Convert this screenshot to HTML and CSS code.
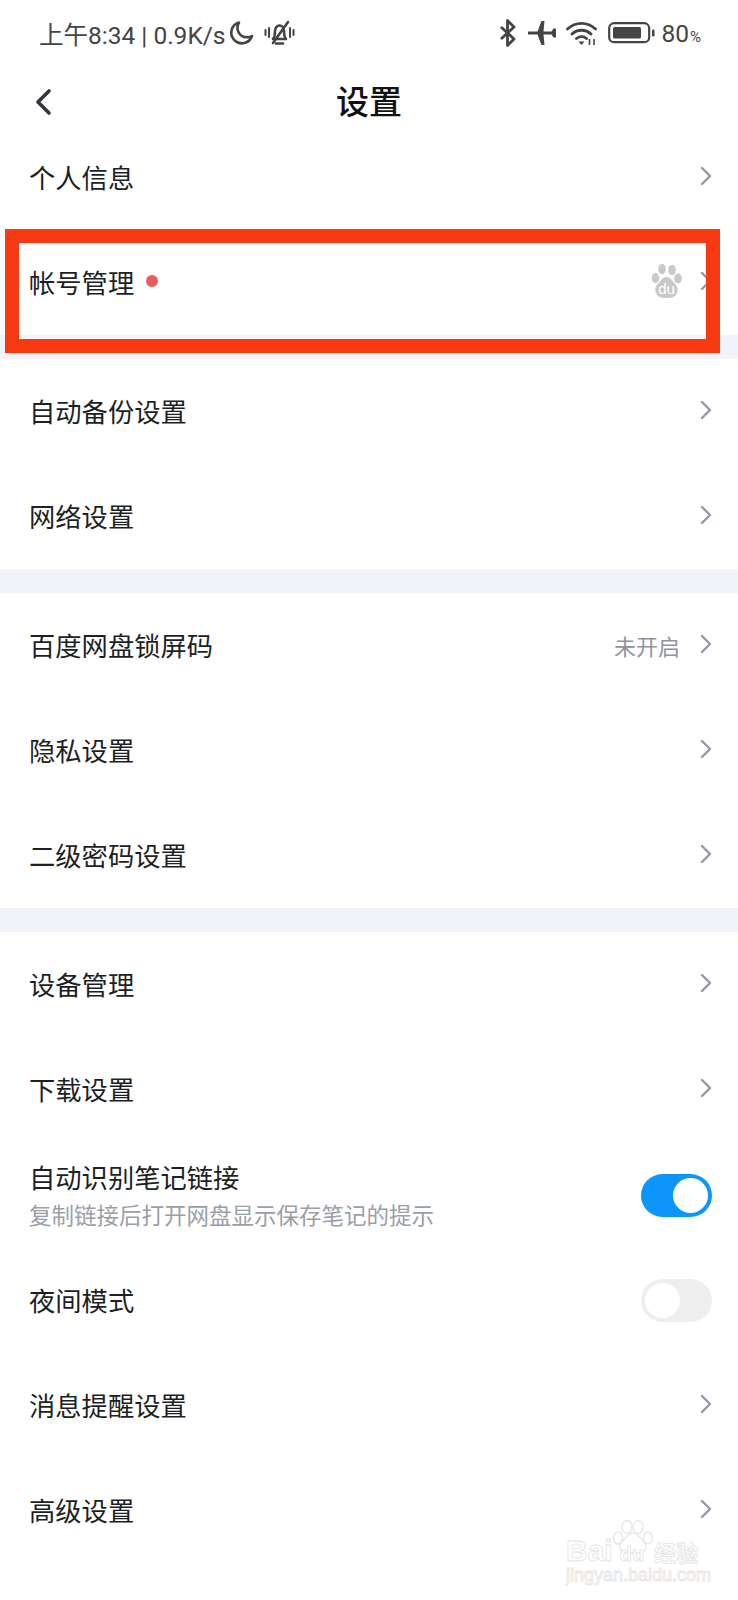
FILE: index.html
```html
<!DOCTYPE html>
<html lang="zh-CN">
<head>
  <meta charset="UTF-8">
  <title>设置</title>
  <link rel="stylesheet" href="styles.css">
</head>
<body>
  <div class="page">
    <!-- status bar -->
    <div class="status-bar">
      <div class="status-left">
        <span>上午8:34 | 0.9K/s</span>
        <svg class="moon" width="26" height="26" viewBox="0 0 26 26"><path d="M11 2.500a10.600 10.600 0 1 0 13 13.500c-1.600 1-3.400 1.400-5 1.300A9.600 9.600 0 0 1 11 2.500z" fill="none" stroke="#444" stroke-width="2.600" stroke-linejoin="round"/></svg>
        <svg class="bell" width="31" height="26" viewBox="0 0 31 26"><path d="M9 19c2-2 2-4 2-8 0-3 2-5.500 4.500-5.500S20 8 20 11c0 4 0 6 2 8z" fill="none" stroke="#444" stroke-width="2.600" stroke-linejoin="round"/><path d="M12 23.500h7" stroke="#444" stroke-width="2.600" stroke-linecap="round"/><path d="M9 23 24 2" stroke="#444" stroke-width="2.600" stroke-linecap="round"/><path d="M1.500 10v5M5 8v9M26 8v9M29.500 10v5" stroke="#444" stroke-width="2" stroke-linecap="round"/></svg>
      </div>
      <div class="status-right">
        <svg width="18" height="28" viewBox="0 0 18 28"><path d="M2 8l13 12-6.500 6.500v-25L15 8 2 20" fill="none" stroke="#444" stroke-width="2.800" stroke-linejoin="round"/></svg>
        <svg class="plane" width="30" height="26" viewBox="0 0 30 26"><path d="M1 11.500h9.500L14.500 1h3l-1 10.500h8l2-3h2.500v9h-2.500l-2-3h-8l1 10.500h-3l-4-10.500H1z" fill="#444"/></svg>
        <svg class="wifi" width="33" height="26" viewBox="0 0 33 26"><path d="M1.500 9c8-7.500 20-7.500 28 0M6 14c5.500-5 13.500-5 19 0M10.500 18.500c3-2.500 7-2.500 10 0" fill="none" stroke="#444" stroke-width="2.800" stroke-linecap="round"/><path d="M12.500 21.500h6l-3 3.500z" fill="#444"/><path d="M23.500 19v6M28 19v6" stroke="#444" stroke-width="1.600"/></svg>
        <svg class="battery" width="47" height="22" viewBox="0 0 47 22"><rect x="1.200" y="1.200" width="40" height="19" rx="5" fill="none" stroke="#444" stroke-width="2.200"/><rect x="5" y="5" width="28" height="11.500" rx="1.500" fill="#444"/><rect x="44" y="7.500" width="2.500" height="7" rx="1.200" fill="#444"/></svg>
        <span class="battery-text">80<small>%</small></span>
      </div>
    </div>

    <!-- title bar -->
    <div class="nav-bar">
      <svg class="back" width="18" height="28" viewBox="0 0 18 28"><path d="M15 3 4 14l11 11" fill="none" stroke="#33363b" stroke-width="3.600" stroke-linecap="round" stroke-linejoin="round"/></svg>
      <h1>设置</h1>
    </div>

    <div class="group">
      <div class="row"><span class="row-title">个人信息</span><svg class="chevron" viewBox="0 0 12 20"><path d="M2 2l8 8-8 8"/></svg></div>
      <div class="row">
        <span class="row-title">帐号管理</span>
        <span class="dot"></span>
        <svg class="paw" width="31" height="36" viewBox="0 0 31 36">
          <ellipse cx="11" cy="6" rx="3.800" ry="5.300" fill="#c9c9c9"/>
          <ellipse cx="21" cy="7" rx="3.800" ry="5.300" fill="#c9c9c9"/>
          <ellipse cx="4.500" cy="15" rx="3.800" ry="5" fill="#c9c9c9"/>
          <ellipse cx="27" cy="15.500" rx="3.800" ry="5" fill="#c9c9c9"/>
          <path d="M15.500 14c4 0 5 3 8 6 3 3 4 6 2.500 10-1.500 4-5 5-10.500 5S6.500 34 5 30c-1.500-4-.5-7 2.500-10s4-6 8-6z" fill="#c9c9c9"/>
          <text x="15.500" y="31" class="paw-text">du</text>
        </svg>
        <svg class="chevron" viewBox="0 0 12 20"><path d="M2 2l8 8-8 8"/></svg>
      </div>
    </div>

    <div class="group">
      <div class="row"><span class="row-title">自动备份设置</span><svg class="chevron" viewBox="0 0 12 20"><path d="M2 2l8 8-8 8"/></svg></div>
      <div class="row"><span class="row-title">网络设置</span><svg class="chevron" viewBox="0 0 12 20"><path d="M2 2l8 8-8 8"/></svg></div>
    </div>

    <div class="group">
      <div class="row">
        <span class="row-title">百度网盘锁屏码</span>
        <span class="row-value">未开启</span>
        <svg class="chevron" viewBox="0 0 12 20"><path d="M2 2l8 8-8 8"/></svg>
      </div>
      <div class="row"><span class="row-title">隐私设置</span><svg class="chevron" viewBox="0 0 12 20"><path d="M2 2l8 8-8 8"/></svg></div>
      <div class="row"><span class="row-title">二级密码设置</span><svg class="chevron" viewBox="0 0 12 20"><path d="M2 2l8 8-8 8"/></svg></div>
    </div>

    <div class="group group-last">
      <div class="row"><span class="row-title">设备管理</span><svg class="chevron" viewBox="0 0 12 20"><path d="M2 2l8 8-8 8"/></svg></div>
      <div class="row"><span class="row-title">下载设置</span><svg class="chevron" viewBox="0 0 12 20"><path d="M2 2l8 8-8 8"/></svg></div>
      <div class="row row-tall">
        <div class="row-stack">
          <span class="row-title">自动识别笔记链接</span>
          <span class="row-sub">复制链接后打开网盘显示保存笔记的提示</span>
        </div>
        <span class="toggle on"></span>
      </div>
      <div class="row"><span class="row-title">夜间模式</span><span class="toggle"></span></div>
      <div class="row"><span class="row-title">消息提醒设置</span><svg class="chevron" viewBox="0 0 12 20"><path d="M2 2l8 8-8 8"/></svg></div>
      <div class="row"><span class="row-title">高级设置</span><svg class="chevron" viewBox="0 0 12 20"><path d="M2 2l8 8-8 8"/></svg></div>
    </div>

    <!-- annotation drawn on top of the screenshot -->
    <div class="red-frame"></div>

    <!-- watermark -->
    <div class="watermark">
      <svg class="wm-paw" width="42" height="42" viewBox="0 0 42 42" fill="#fff" stroke="#e6e6e6" stroke-width="1.300">
        <ellipse cx="15" cy="8" rx="5" ry="6.500"/>
        <ellipse cx="26" cy="8" rx="5" ry="6.500"/>
        <ellipse cx="6" cy="19" rx="4.500" ry="6"/>
        <ellipse cx="36" cy="19" rx="4.500" ry="6"/>
        <path d="M21 14c5 0 7 5 11 9 4 4 2 11-4 11H14C8 34 6 27 10 23c4-4 6-9 11-9z"/>
      </svg>
      <div class="wm-brand">Bai<span class="wm-du">du</span><span class="wm-cn">经验</span></div>
      <div class="wm-url">jingyan.baidu.com</div>
    </div>
  </div>
</body>
</html>
```

FILE: styles.css
```css
* {
  box-sizing: border-box;
}
body {
  margin: 0;
  background: #fff;
  font-family: "Noto Sans CJK SC", "Noto Sans", sans-serif;
  color: #1c1f24;
}
.page {
  position: relative;
  width: 738px;
  height: 1600px;
  overflow: hidden;
  background: #fff;
}
.status-bar {
  height: 66px;
  padding: 0 37px 0 39px;
  display: flex;
  justify-content: space-between;
  align-items: center;
  font-family: Roboto, "Noto Sans CJK SC", sans-serif;
  font-size: 24.500px;
  color: #444;
}
.status-left,
.status-right {
  display: flex;
  align-items: center;
}
.moon {
  margin-left: 2px;
}
.bell {
  margin-left: 10px;
}
.plane {
  margin-left: 10px;
}
.wifi {
  margin-left: 9px;
}
.battery {
  margin-left: 9px;
}
.battery-text {
  margin-left: 6px;
  font-size: 24.500px;
}
.battery-text small {
  font-size: 15px;
  margin-left: 1px;
}
.nav-bar {
  position: relative;
  height: 59px;
  padding-left: 34px;
  display: flex;
  align-items: center;
}
.nav-bar h1 {
  position: absolute;
  left: 0;
  right: 0;
  top: 5px;
  margin: 0;
  text-align: center;
  font-size: 33px;
  font-weight: 500;
  color: #111;
  line-height: 59px;
}
.back {
  margin-top: 12px;
}
.group {
  border-bottom: 24px solid #f1f3f8;
}
.group-last {
  border-bottom: none;
}
.row {
  height: 105px;
  padding: 0 26px 0 29px;
  display: flex;
  align-items: center;
}
.row-tall {
  height: 106px;
}
.row-title {
  margin-top: -2px;
  font-size: 26.300px;
  line-height: 36px;
  color: #1c1f24;
}
.row-stack {
  display: flex;
  flex-direction: column;
}
.row-sub {
  font-size: 22.500px;
  line-height: 32px;
  margin-top: 3px;
  color: #9a9ea8;
}
.row-value {
  margin-top: -2px;
  margin-left: auto;
  font-size: 22px;
  color: #8e939e;
}
.row-value + .chevron {
  margin-left: 20px;
}
.chevron {
  width: 12px;
  height: 20px;
  margin-top: -3px;
  margin-left: auto;
  fill: none;
  stroke: #9298a6;
  stroke-width: 2.400;
  stroke-linecap: round;
  stroke-linejoin: round;
}
.dot {
  width: 12px;
  height: 12px;
  margin: -4px 0 0 12px;
  border-radius: 50%;
  background: #ee5b5b;
}
.paw {
  margin: -3px 0 0 auto;
}
.paw + .chevron {
  margin-left: 18px;
}
.paw-text {
  font-family: "Liberation Sans", sans-serif;
  font-size: 15px;
  fill: #fff;
  text-anchor: middle;
}
.toggle {
  position: relative;
  width: 71px;
  height: 43px;
  margin-left: auto;
  border-radius: 22px;
  background: #eeeeee;
}
.toggle::after {
  content: "";
  position: absolute;
  top: 4px;
  left: 4px;
  width: 35px;
  height: 35px;
  border-radius: 50%;
  background: #fff;
}
.toggle.on {
  background: #0d95fb;
}
.toggle.on::after {
  left: 32px;
}
.red-frame {
  position: absolute;
  left: 5px;
  top: 229px;
  width: 715px;
  height: 124px;
  border: 14px solid #f83a12;
}
.watermark {
  position: absolute;
  left: 566px;
  top: 1518px;
  width: 135px;
  height: 68px;
  color: #fff;
  font-family: "Liberation Sans", sans-serif;
  -webkit-text-stroke: 0.800px #e4e4e4;
}
.wm-paw {
  position: absolute;
  left: 46px;
  top: 1px;
}
.wm-brand {
  position: absolute;
  left: 0;
  top: 18px;
  font-size: 30px;
  line-height: 30px;
  font-weight: 700;
  white-space: nowrap;
}
.wm-du {
  font-size: 20px;
  margin-left: 7px;
}
.wm-cn {
  font-family: "Noto Sans CJK SC", sans-serif;
  font-size: 22px;
  margin-left: 10px;
}
.wm-url {
  position: absolute;
  left: 0;
  top: 47px;
  font-size: 18px;
  line-height: 20px;
  white-space: nowrap;
}
```
